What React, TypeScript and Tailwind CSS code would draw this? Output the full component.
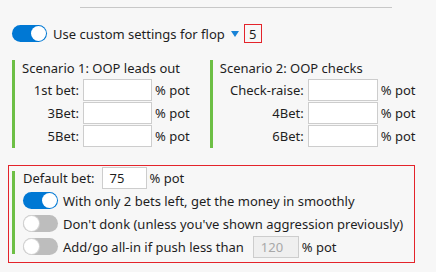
import type { ReactNode } from 'react';

function Toggle({ on }: { on: boolean }) {
  return (
    <div
      className={`relative h-[17px] w-[35px] shrink-0 rounded-full ${on ? 'bg-[#0078d4]' : 'bg-[#bdbdbd]'}`}
    >
      <div
        className={`absolute top-[1px] h-[15px] w-[15px] rounded-full bg-white ${
          on ? 'right-[1px]' : 'left-[1px] shadow-[0_0_0_1px_#d4d4d4]'
        }`}
      />
    </div>
  );
}

function PctInput({ value = '', width, disabled = false }: { value?: string; width: string; disabled?: boolean }) {
  return (
    <div
      className={`flex h-[22px] ${width} items-center border border-[#cdcdcd] px-[7px] ${
        disabled ? 'bg-[#efefef] text-[#a8a8a8]' : 'bg-white'
      }`}
    >
      {value}
    </div>
  );
}

function BetRow({ label, labelWidth, inputWidth }: { label: string; labelWidth: string; inputWidth: string }) {
  return (
    <div className="flex h-[23px] items-start">
      <span className={`${labelWidth} pt-[2px] text-right`}>{label}</span>
      <div className="ml-[4px]">
        <PctInput width={inputWidth} />
      </div>
      <span className="ml-[3px] pt-[2px]">% pot</span>
    </div>
  );
}

function Scenario({ title, children }: { title: string; children: ReactNode }) {
  return (
    <div className="flex flex-col border-l-[3px] border-[#6dbf45] pl-[7px]">
      <div className="h-[19px] leading-[17px]">{title}</div>
      {children}
    </div>
  );
}

export default function App() {
  return (
    <div
      className="h-[272px] w-[436px] overflow-hidden bg-[#f7f7f7] text-[13px] leading-[18px] text-[#1e1e1e]"
      style={{ fontFamily: '"Noto Sans", "Open Sans", sans-serif' }}
    >
      <div className="ml-[80px] mt-[7px] h-px w-[312px] bg-[#c8c8c8]" />

      <div className="ml-[12px] mt-[16px] flex h-[19px] items-center">
        <Toggle on />
        <span className="ml-[6px]">Use custom settings for flop</span>
        <svg width="8" height="6" viewBox="0 0 8 6" className="ml-[6px]">
          <path d="M0 0 H8 L4 6 Z" fill="#1883d7" />
        </svg>
        <div className="ml-[5px] flex h-[19px] w-[18px] items-center justify-center border border-[#e4242b]">
          5
        </div>
      </div>

      <div className="ml-[12px] mt-[17px] flex">
        <Scenario title="Scenario 1: OOP leads out">
          <BetRow label="1st bet:" labelWidth="w-[57px]" inputWidth="w-[69px]" />
          <BetRow label="3Bet:" labelWidth="w-[57px]" inputWidth="w-[69px]" />
          <BetRow label="5Bet:" labelWidth="w-[57px]" inputWidth="w-[69px]" />
        </Scenario>
        <div className="ml-[20px]">
          <Scenario title="Scenario 2: OOP checks">
            <BetRow label="Check-raise:" labelWidth="w-[84px]" inputWidth="w-[70px]" />
            <BetRow label="4Bet:" labelWidth="w-[84px]" inputWidth="w-[70px]" />
            <BetRow label="6Bet:" labelWidth="w-[84px]" inputWidth="w-[70px]" />
          </Scenario>
        </div>
      </div>

      <div className="ml-[8px] mt-[17px] flex w-[407px] border border-[#e4242b] pb-[4px] pl-[3px]">
        <div className="mb-[4px] mt-[5px] w-[3px] bg-[#6dbf45]" />
        <div className="ml-[8px] flex flex-col">
          <div className="flex h-[23px] items-center">
            <span>Default bet:</span>
            <div className="ml-[7px]">
              <PctInput value="75" width="w-[45px]" />
            </div>
            <span className="ml-[3px]">% pot</span>
          </div>
          <div className="flex h-[23px] items-center">
            <Toggle on />
            <span className="ml-[5px]">With only 2 bets left, get the money in smoothly</span>
          </div>
          <div className="flex h-[23px] items-center">
            <Toggle on={false} />
            <span className="ml-[5px]">Don't donk (unless you've shown aggression previously)</span>
          </div>
          <div className="flex h-[23px] items-center">
            <Toggle on={false} />
            <span className="ml-[5px]">Add/go all-in if push less than</span>
            <div className="ml-[9px]">
              <PctInput value="120" width="w-[46px]" disabled />
            </div>
            <span className="ml-[3px]">% pot</span>
          </div>
        </div>
      </div>
    </div>
  );
}
